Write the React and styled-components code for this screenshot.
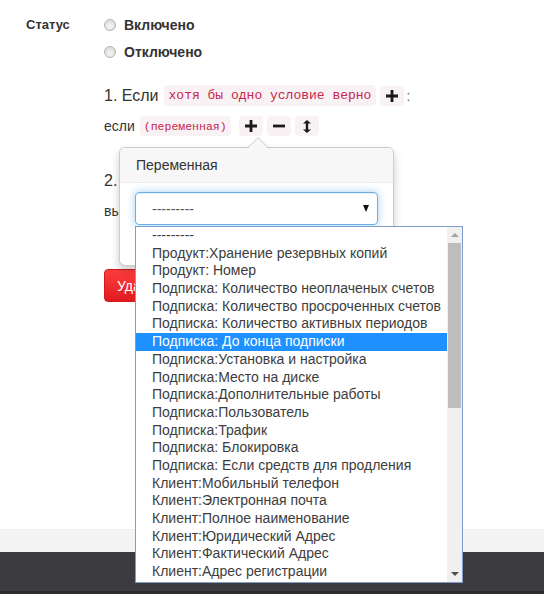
import React from 'react'
import styled, { createGlobalStyle } from 'styled-components'

const GlobalStyle = createGlobalStyle`
  html, body {
    margin: 0;
    padding: 0;
    background: #fff;
  }
  body {
    font-family: "Liberation Sans", Arial, Helvetica, sans-serif;
    color: #333;
  }
  * { box-sizing: border-box; }
`

const options = [
  '---------',
  'Продукт:Хранение резервных копий',
  'Продукт: Номер',
  'Подписка: Количество неоплаченых счетов',
  'Подписка: Количество просроченных счетов',
  'Подписка: Количество активных периодов',
  'Подписка: До конца подписки',
  'Подписка:Установка и настройка',
  'Подписка:Место на диске',
  'Подписка:Дополнительные работы',
  'Подписка:Пользователь',
  'Подписка:Трафик',
  'Подписка: Блокировка',
  'Подписка: Если средств для продления',
  'Клиент:Мобильный телефон',
  'Клиент:Электронная почта',
  'Клиент:Полное наименование',
  'Клиент:Юридический Адрес',
  'Клиент:Фактический Адрес',
  'Клиент:Адрес регистрации',
]

const selectedIndex = 6

const PlusIcon = () => (
  <svg width="12" height="12" viewBox="0 0 12 12">
    <path d="M4.6 0h2.8v4.6H12v2.8H7.4V12H4.6V7.4H0V4.6h4.6z" fill="#1a1a1a" />
  </svg>
)

const MinusIcon = () => (
  <svg width="12" height="12" viewBox="0 0 12 12">
    <rect x="0" y="4.6" width="12" height="2.8" fill="#1a1a1a" />
  </svg>
)

const ResizeIcon = () => (
  <svg width="8" height="13" viewBox="0 0 8 13">
    <path d="M4 0L8 3.6H5.2v5.8H8L4 13 0 9.4h2.8V3.6H0z" fill="#1a1a1a" />
  </svg>
)

function App() {
  return (
    <>
      <GlobalStyle />
      <Page>
        <Content>
          <FieldRow>
            <FieldLabel>Статус</FieldLabel>
            <RadioGroup>
              <RadioOption>
                <Radio />
                Включено
              </RadioOption>
              <RadioOption>
                <Radio />
                Отключено
              </RadioOption>
            </RadioGroup>
          </FieldRow>

          <Rules>
            <RuleTitle>
              1. Если
              <Code>хотя бы одно условие верно</Code>
              <IconChip>
                <PlusIcon />
              </IconChip>
              <Colon>:</Colon>
            </RuleTitle>
            <ConditionRow>
              если
              <Code small>(переменная)</Code>
              <IconGroup>
                <IconChip>
                  <PlusIcon />
                </IconChip>
                <IconChip>
                  <MinusIcon />
                </IconChip>
                <IconChip>
                  <ResizeIcon />
                </IconChip>
              </IconGroup>
            </ConditionRow>

            <RuleTitle second>2. Если</RuleTitle>
            <ConditionRow action>выполнить</ConditionRow>
            <DangerButton>Удалить правило</DangerButton>
          </Rules>

          <Popover>
            <PopoverArrow />
            <PopoverHeader>Переменная</PopoverHeader>
            <PopoverBody>
              <SelectBox>
                <span>---------</span>
                <Caret />
              </SelectBox>
            </PopoverBody>
          </Popover>

          <OptionList>
            <Options>
              {options.map((o, i) => (
                <OptionItem key={i} selected={i === selectedIndex}>
                  {o}
                </OptionItem>
              ))}
            </Options>
            <ScrollTrack>
              <ScrollButton>
                <ArrowUp />
              </ScrollButton>
              <ScrollThumb />
              <ScrollSpace />
              <ScrollButton>
                <ArrowDown />
              </ScrollButton>
            </ScrollTrack>
          </OptionList>
        </Content>

        <Footer>
          <FooterStrip />
          <FooterDark />
        </Footer>
      </Page>
    </>
  )
}

export default App

const Page = styled.div`
  width: 544px;
  height: 594px;
  overflow: hidden;
  display: flex;
  flex-direction: column;
`

const Content = styled.div`
  position: relative;
  height: 529px;
  flex-shrink: 0;
  padding-top: 15px;
`

const FieldRow = styled.div`
  display: flex;
  padding-left: 26px;
`

const FieldLabel = styled.div`
  width: 78px;
  font-size: 13px;
  font-weight: bold;
  line-height: 20px;
  color: #333;
`

const RadioGroup = styled.div`
  display: flex;
  flex-direction: column;
  gap: 7px;
`

const RadioOption = styled.label`
  display: flex;
  align-items: center;
  gap: 8px;
  height: 20px;
  font-size: 14px;
  font-weight: bold;
  color: #333;
`

const Radio = styled.span`
  width: 12px;
  height: 12px;
  border-radius: 50%;
  border: 1px solid #b3b3b3;
  background: radial-gradient(circle at 50% 65%, #f6f6f6 0%, #dedede 70%, #d2d2d2 100%);
`

const Rules = styled.div`
  margin-left: 104px;
  margin-top: 23px;
  display: flex;
  flex-direction: column;
  align-items: flex-start;
`

const RuleTitle = styled.div`
  display: flex;
  align-items: center;
  height: ${p => (p.second ? '22px' : '21px')};
  margin-top: ${p => (p.second ? '34px' : '0')};
  font-size: 16px;
  color: #333;
`

const ConditionRow = styled.div`
  display: flex;
  align-items: center;
  height: 20px;
  margin-top: ${p => (p.action ? '9px' : '10px')};
  font-size: 14px;
  color: #333;
`

const Code = styled.code`
  display: inline-flex;
  align-items: center;
  height: ${p => (p.small ? '20px' : '21px')};
  margin-left: 5px;
  padding: 0 ${p => (p.small ? '4px' : '5px')};
  font-family: "Liberation Mono", "DejaVu Sans Mono", monospace;
  font-size: ${p => (p.small ? '11.5px' : '13px')};
  color: #c7254e;
  background: #f9f2f4;
  border-radius: 4px;
`

const IconGroup = styled.div`
  display: flex;
  gap: 4px;
  margin-left: 8px;
`

const IconChip = styled.span`
  display: inline-flex;
  align-items: center;
  justify-content: center;
  width: 24px;
  height: 20px;
  margin-left: 4px;
  background: #f8f2f4;
  border-radius: 4px;
  ${IconGroup} & {
    margin-left: 0;
  }
`

const Colon = styled.span`
  margin-left: 2px;
  font-size: 14px;
  color: #666;
`

const DangerButton = styled.button`
  margin-top: 48px;
  height: 33px;
  padding: 0 12px;
  border: 1px solid #d01a1f;
  border-radius: 4px;
  background: linear-gradient(#ff3d3d, #e01b20);
  color: #fff;
  font-family: inherit;
  font-size: 14px;
`

const Popover = styled.div`
  position: absolute;
  top: 147px;
  left: 119px;
  width: 275px;
  background: #fff;
  border: 1px solid rgba(0, 0, 0, 0.2);
  border-radius: 6px;
  box-shadow: 0 5px 10px rgba(0, 0, 0, 0.2);
`

const PopoverArrow = styled.div`
  position: absolute;
  top: -11px;
  left: 127px;
  width: 0;
  height: 0;
  border-left: 11px solid transparent;
  border-right: 11px solid transparent;
  border-bottom: 11px solid rgba(0, 0, 0, 0.22);
  &::after {
    content: '';
    position: absolute;
    top: 1px;
    left: -10px;
    border-left: 10px solid transparent;
    border-right: 10px solid transparent;
    border-bottom: 10px solid #f7f7f7;
  }
`

const PopoverHeader = styled.div`
  height: 35px;
  padding: 0 16px;
  display: flex;
  align-items: center;
  font-size: 14px;
  color: #333;
  background: #f7f7f7;
  border-bottom: 1px solid #ebebeb;
  border-radius: 5px 5px 0 0;
`

const PopoverBody = styled.div`
  padding: 9px 15px 40px;
`

const SelectBox = styled.div`
  height: 33px;
  display: flex;
  align-items: center;
  justify-content: space-between;
  padding: 0 8px 0 16px;
  border: 1px solid #66afe9;
  border-radius: 4px;
  box-shadow: inset 0 1px 1px rgba(0, 0, 0, 0.075), 0 0 8px rgba(102, 175, 233, 0.6);
  font-size: 14px;
  color: #555;
`

const Caret = styled.span`
  width: 0;
  height: 0;
  border-left: 3.5px solid transparent;
  border-right: 3.5px solid transparent;
  border-top: 7px solid #111;
`

const OptionList = styled.div`
  position: absolute;
  top: 226px;
  left: 135px;
  width: 328px;
  height: 357px;
  display: flex;
  background: #fff;
  border: 1px solid #7f9dc9;
`

const Options = styled.div`
  flex: 1;
  display: flex;
  flex-direction: column;
  overflow: hidden;
`

const OptionItem = styled.div`
  height: 17.7px;
  line-height: 17.7px;
  padding-left: 16px;
  font-size: 14px;
  white-space: nowrap;
  color: ${p => (p.selected ? '#fff' : '#3d3d3d')};
  background: ${p => (p.selected ? '#1e90ff' : 'transparent')};
`

const ScrollTrack = styled.div`
  width: 15px;
  display: flex;
  flex-direction: column;
  background: #f0f0f0;
`

const ScrollButton = styled.div`
  height: 16px;
  display: flex;
  align-items: center;
  justify-content: center;
`

const ScrollThumb = styled.div`
  height: 165px;
  margin: 0 1px;
  background: #bdbdbd;
`

const ScrollSpace = styled.div`
  flex: 1;
`

const ArrowUp = styled.span`
  width: 0;
  height: 0;
  border-left: 4px solid transparent;
  border-right: 4px solid transparent;
  border-bottom: 4px solid #a3a3a3;
`

const ArrowDown = styled.span`
  width: 0;
  height: 0;
  border-left: 4px solid transparent;
  border-right: 4px solid transparent;
  border-top: 4px solid #505050;
`

const Footer = styled.div`
  flex: 1;
  display: flex;
  flex-direction: column;
`

const FooterStrip = styled.div`
  height: 23px;
  background: #f4f4f4;
  border-top: 1px solid #ececec;
`

const FooterDark = styled.div`
  flex: 1;
  background: #3c3b40;
  border-bottom: 3px solid #2c2b30;
`
